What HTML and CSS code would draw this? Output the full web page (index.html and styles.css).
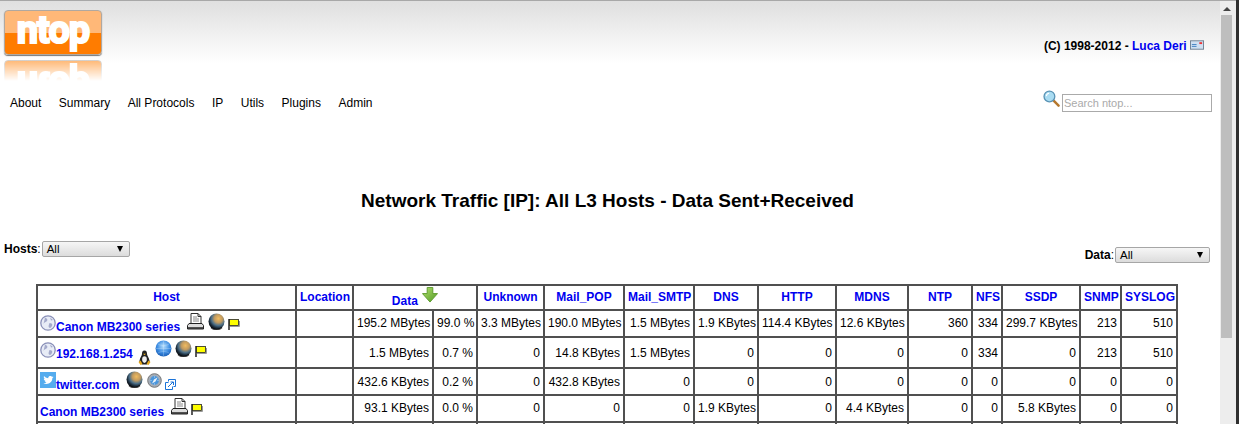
FILE: index.html
```html
<!DOCTYPE html>
<html>
<head>
<meta charset="utf-8">
<title>ntop</title>
<link rel="stylesheet" href="styles.css">
</head>
<body>
<div class="window">
<main class="page">
  <header class="masthead">
    <div class="logo-block">
      <div class="logo"><span class="logo-text">ntop</span></div>
      <div class="logo-mirror" aria-hidden="true"><div class="logo flipped"><span class="logo-text">ntop</span></div></div>
    </div>
    <p class="credit">(C) 1998-2012 - <a href="#">Luca Deri</a>
      <svg class="mail" width="14" height="10" viewBox="0 0 15 10"><rect x=".5" y=".5" width="14" height="9" fill="#cfe0f2" stroke="#6f7f90"/><rect x="10" y="2" width="3" height="2" fill="#e33"/><path d="M2 4.500h5M2 6.500h5" stroke="#3f7fc0"/></svg>
    </p>
  </header>
  <div class="navrow">
    <nav class="menu">
      <a>About</a><a>Summary</a><a>All Protocols</a><a>IP</a><a>Utils</a><a>Plugins</a><a>Admin</a>
    </nav>
    <div class="search">
      <svg class="lens" width="17" height="17" viewBox="0 0 18 18"><path d="M10.500 10.500l6 6" stroke="#b5772c" stroke-width="2.600" stroke-linecap="round"/><circle cx="6.800" cy="6.800" r="5.700" fill="#a9dcf2" stroke="#5a93b5" stroke-width="1.400"/><path d="M3.500 6.500a3.500 3.500 0 0 1 3-3" stroke="#fff" fill="none" stroke-width="1.200"/></svg>
      <input class="search-box" type="text" placeholder="Search ntop...">
    </div>
  </div>
  <h1 class="title">Network Traffic [IP]: All L3 Hosts - Data Sent+Received</h1>
  <div class="filters">
    <div class="filter"><b>Hosts</b>:<span class="picker hosts-picker">All<i class="caret"></i></span></div>
    <div class="filter data-filter"><b>Data</b>:<span class="picker data-picker">All<i class="caret"></i></span></div>
  </div>
  <table class="traffic">
    <colgroup>
      <col class="c1"><col class="c2"><col class="c3"><col class="c4"><col class="c5"><col class="c6"><col class="c7"><col class="c8"><col class="c9"><col class="c10"><col class="c11"><col class="c12"><col class="c13"><col class="c14"><col class="c15">
    </colgroup>
    <tr class="head">
      <th><a>Host</a></th><th><a>Location</a></th>
      <th colspan="2" class="data-head"><a>Data</a> <svg class="down" width="16" height="16" viewBox="0 0 17 17"><defs><linearGradient id="arrowfill" x1="0" y1="0" x2="1" y2="1"><stop offset="0" stop-color="#b4e070"/><stop offset="1" stop-color="#4f9a22"/></linearGradient></defs><path d="M5.500 .5h6v6.500h5L8.500 16 .5 7h5z" fill="url(#arrowfill)" stroke="#5c9a2c"/></svg></th>
      <th><a>Unknown</a></th><th><a>Mail_POP</a></th><th><a>Mail_SMTP</a></th><th><a>DNS</a></th><th><a>HTTP</a></th><th><a>MDNS</a></th><th><a>NTP</a></th><th><a>NFS</a></th><th><a>SSDP</a></th><th><a>SNMP</a></th><th><a>SYSLOG</a></th>
    </tr>
    <tr class="r1">
      <td class="host"><svg class="ic globe-grey" width="16" height="16" viewBox="0 0 16 16"><use href="#g-grey"/></svg><a>Canon MB2300 series</a><svg class="ic after-name" width="17" height="17" viewBox="0 0 17 17"><use href="#g-printer"/></svg><svg class="ic gap4" width="17" height="17" viewBox="0 0 17 17"><use href="#g-earth"/></svg><svg class="ic flag" width="12" height="13" viewBox="0 0 12 13"><use href="#g-flag"/></svg></td>
      <td></td><td>195.2 MBytes</td><td>99.0 %</td><td>3.3 MBytes</td><td>190.0 MBytes</td><td>1.5 MBytes</td><td>1.9 KBytes</td><td>114.4 KBytes</td><td>12.6 KBytes</td><td>360</td><td>334</td><td>299.7 KBytes</td><td>213</td><td>510</td>
    </tr>
    <tr class="r2">
      <td class="host"><svg class="ic globe-grey" width="16" height="16" viewBox="0 0 16 16"><use href="#g-grey"/></svg><a>192.168.1.254</a><svg class="ic tux" width="13" height="15" viewBox="0 0 13 15"><use href="#g-tux"/></svg><svg class="ic gap4" width="17" height="17" viewBox="0 0 17 17"><use href="#g-blue"/></svg><svg class="ic gap3" width="17" height="17" viewBox="0 0 17 17"><use href="#g-earth"/></svg><svg class="ic flag" width="12" height="13" viewBox="0 0 12 13"><use href="#g-flag"/></svg></td>
      <td></td><td>1.5 MBytes</td><td>0.7 %</td><td>0</td><td>14.8 KBytes</td><td>1.5 MBytes</td><td>0</td><td>0</td><td>0</td><td>0</td><td>334</td><td>0</td><td>213</td><td>510</td>
    </tr>
    <tr class="r3">
      <td class="host"><svg class="ic bird" width="16" height="16" viewBox="0 0 16 16"><rect width="16" height="16" fill="#55acee"/><path d="M13 4.800c-.4.200-.8.300-1.200.3.400-.3.700-.6.900-1.100-.4.200-.8.400-1.300.5-.9-1-2.900-.4-3.100 1-.1.300 0 .6 0 .8-1.700-.1-3.200-.9-4.200-2.200-.6 1-.3 2.100.6 2.800-.3 0-.6-.1-.9-.2 0 1 .7 1.900 1.700 2.100-.3.100-.6.100-.9 0 .3.800 1 1.400 1.900 1.400-.9.700-2 1-3.100.9 3.800 2.300 9-.1 9-5 .4-.3.800-.7 1.100-1.100z" fill="#fff"/></svg><a>twitter.com</a><svg class="ic after-name" width="17" height="17" viewBox="0 0 17 17"><use href="#g-earth"/></svg><svg class="ic compass gap4" width="15" height="15" viewBox="0 0 15 15"><circle cx="7.500" cy="7.500" r="6.800" fill="#a4adb8" stroke="#777"/><circle cx="7.500" cy="7.500" r="4.400" fill="#4a96dc"/><path d="M10.500 4.500l-2 4-3.500 2 2-4z" fill="#eef3f8"/><path d="M7.500 3.500v1M7.500 10.500v1M3.500 7.500h1M10.500 7.500h1" stroke="#fff" stroke-width=".6"/></svg><svg class="ic ext gap3" width="11" height="11" viewBox="0 0 11 11"><path d="M.5 3.500h3M.5 3.500v7h7v-3" fill="none" stroke="#1a73d8"/><path d="M3.500 .5h7v7h-2M3.500 .5v2" fill="none" stroke="#1a73d8"/><path d="M3 8l5-5M5.500 3h3v3" fill="none" stroke="#1a73d8"/></svg></td>
      <td></td><td>432.6 KBytes</td><td>0.2 %</td><td>0</td><td>432.8 KBytes</td><td>0</td><td>0</td><td>0</td><td>0</td><td>0</td><td>0</td><td>0</td><td>0</td><td>0</td>
    </tr>
    <tr class="r4">
      <td class="host"><a>Canon MB2300 series</a><svg class="ic after-name" width="17" height="17" viewBox="0 0 17 17"><use href="#g-printer"/></svg><svg class="ic flag" width="12" height="13" viewBox="0 0 12 13"><use href="#g-flag"/></svg></td>
      <td></td><td>93.1 KBytes</td><td>0.0 %</td><td>0</td><td>0</td><td>0</td><td>1.9 KBytes</td><td>0</td><td>4.4 KBytes</td><td>0</td><td>0</td><td>5.8 KBytes</td><td>0</td><td>0</td>
    </tr>
    <tr class="r5"><td></td><td></td><td></td><td></td><td></td><td></td><td></td><td></td><td></td><td></td><td></td><td></td><td></td><td></td><td></td></tr>
  </table>
</main>
<aside class="scrollbar"><span class="arrow"></span><span class="thumb"></span></aside>
<div class="edge"></div>
</div>
<svg class="defs" width="0" height="0">
  <defs>
    <radialGradient id="earth" cx=".62" cy=".32" r=".72"><stop offset="0" stop-color="#f0bc60"/><stop offset=".35" stop-color="#c09a60"/><stop offset=".6" stop-color="#4d7088"/><stop offset=".82" stop-color="#1a2a38"/><stop offset="1" stop-color="#08090c"/></radialGradient>
    <radialGradient id="bluegl" cx=".5" cy=".35" r=".7"><stop offset="0" stop-color="#b8e0fc"/><stop offset=".55" stop-color="#3f8fe4"/><stop offset="1" stop-color="#1458b0"/></radialGradient>
    <symbol id="g-grey" viewBox="0 0 16 16"><circle cx="8" cy="8" r="7.200" fill="#e8ecf6" stroke="#8a90b8" stroke-width="1.300"/><path d="M5 2.500c2 1 3 2 2 3.500s-3 1-3.500 3M9.500 8c2 0 3.500 1 2.500 3s-2 2.500-3 1.500 0-3 .5-4.500zM10 2.500l3 2.500-2 .5z" fill="#a4aacb"/></symbol>
    <symbol id="g-earth" viewBox="0 0 17 17"><circle cx="8.500" cy="8.500" r="8" fill="url(#earth)"/><path d="M3 14.500a8 8 0 0 0 11 0" fill="none" stroke="#000" stroke-opacity=".7" stroke-width="1.400"/></symbol>
    <symbol id="g-blue" viewBox="0 0 17 17"><circle cx="8.500" cy="8.500" r="8" fill="url(#bluegl)"/><path d="M8.500 1v15M1 8.500h15M3 4c3 2 8 2 11 0M3 13c3-2 8-2 11 0" fill="none" stroke="#dff0ff" stroke-opacity=".45" stroke-width=".6"/></symbol>
    <symbol id="g-printer" viewBox="0 0 17 17"><path d="M4 .5h7l3 3v8H4z" fill="#fff" stroke="#333"/><path d="M11 .5v3h3" fill="none" stroke="#333"/><path d="M6 4h4M6 6h6M6 8h6" stroke="#888"/><path d="M.5 12.500l1.500-2h13l1.500 2v3.500h-16z" fill="#ddd" stroke="#222"/><path d="M1 15h15" stroke="#222" stroke-width="1.500"/></symbol>
    <symbol id="g-flag" viewBox="0 0 12 13"><path d="M1 1v11" stroke="#000" stroke-width="1.300"/><rect x="1.500" y="1.500" width="9" height="6" fill="#ff0" stroke="#222" stroke-width=".8"/><path d="M2 8.500h9.500V3" fill="none" stroke="#999"/></symbol>
    <symbol id="g-tux" viewBox="0 0 13 15"><path d="M6.500 .5c-2 0-2.600 1.700-2.500 3.500 0 1.500-2 3.500-2.300 6L1 12.500 4 14.500h5l3-2-.7-2.500C11 7.500 9 5.500 9 4 9.100 2.200 8.500.5 6.500.5z" fill="#222"/><path d="M4.700 7c-1 2-.8 5 1.800 6 2.600-1 2.800-4 1.800-6-1-1-2.600-1-3.600 0z" fill="#eee"/><path d="M5 3.800h3L6.500 5.200z" fill="#e8b020"/><path d="M.5 12l2-1.500L4.500 14l-2 1zM12.500 12l-2-1.500-2 3.500 2 1z" fill="#e8a818"/></symbol>
  </defs>
</svg>
</body>
</html>
```

FILE: styles.css
```css
* { box-sizing: border-box; }
html, body { margin: 0; padding: 0; height: 424px; overflow: hidden; background: #fff; }
body { font-family: "Liberation Sans", Arial, sans-serif; font-size: 12px; color: #000; }
a { color: inherit; text-decoration: none; }
.defs { position: absolute; }
.window { display: flex; width: 1239px; height: 424px; overflow: hidden; }
.page { width: 1220px; flex: none; height: 424px; overflow: hidden; background: linear-gradient(#e0e0e0 1px, #e4e4e4 10px, #fff 62px, #fff); border-top: 1px solid #a8a8a8; }

.masthead { display: flex; justify-content: space-between; height: 80px; padding: 9px 16px 0 4px; }
.logo-block { width: 98px; }
.logo { width: 98px; height: 45px; border-radius: 4px; border: 1px solid #b0a8a0; background: linear-gradient(#ffb878 0, #ffb878 22px, #ff7c00 22px, #ff7c00 100%); box-shadow: 0 1px 1px #777; display: flex; justify-content: center; }
.logo-text { font-family: Roboto, sans-serif; font-weight: 700; font-size: 38px; line-height: 39px; height: 39px; letter-spacing: -1px; color: #fff; -webkit-text-stroke: 2px #fff; }
.logo-mirror { height: 21px; margin-top: 5px; overflow: hidden; -webkit-mask-image: linear-gradient(rgba(0,0,0,.55), rgba(0,0,0,0)); mask-image: linear-gradient(rgba(0,0,0,.55), rgba(0,0,0,0)); }
.flipped { transform: scaleY(-1); box-shadow: none; }
.credit { margin: 29px 0 0; font-weight: 700; font-size: 12px; line-height: 14px; height: 14px; }
.credit a, .traffic a { color: #0000f0; }
.mail { vertical-align: 0; }

.navrow { display: flex; justify-content: space-between; height: 30px; padding: 0 8px 0 10px; }
.menu { display: flex; gap: 17.500px; line-height: 14px; padding-top: 15px; }
.search { display: flex; align-items: flex-start; padding-top: 9px; }
.lens { margin-right: 2px; }
.search-box { width: 150px; height: 18px; margin-top: 4px; padding: 0 1px; border: 1px solid #aaa; font: 11px "Liberation Sans", sans-serif; background: #fff; border-radius: 0; outline: none; }
.search-box::placeholder { color: #aaa; opacity: 1; }

.title { margin: 79px 0 0; padding-right: 5px; text-align: center; font-size: 19px; line-height: 22px; font-weight: 700; }

.filters { display: flex; justify-content: space-between; align-items: flex-start; padding: 0 10px 0 4px; margin-top: 29px; height: 43px; }
.filter { display: flex; align-items: center; height: 16px; font-size: 12px; }
.filter b { font-weight: 700; }
.data-filter { margin-top: 6px; }
.picker { display: flex; align-items: center; justify-content: space-between; height: 16px; margin-left: 1px; padding: 0 6px 0 4px; border: 1px solid #a6a6a6; border-radius: 2px; background: linear-gradient(#f6f6f6, #dcdcdc); font-size: 11.500px; }
.hosts-picker { width: 88px; }
.data-picker { width: 95px; }
.caret { width: 0; height: 0; border-left: 3px solid transparent; border-right: 3px solid transparent; border-top: 6px solid #000; }

.traffic { width: 1140px; margin-left: 36px; border-collapse: collapse; table-layout: fixed; font-size: 12px; background: #fff; }
.traffic td, .traffic th { border: 2px solid #505050; padding: 0 3px; white-space: nowrap; }
.traffic td { text-align: right; color: #000; }
.traffic th { text-align: center; font-size: 12px; font-weight: 700; padding-bottom: 2px; }
.traffic td.host { text-align: left; padding: 0 0 0 2px; font-weight: 700; font-size: 12px; }
.r1 td:not(.host), .r4 td:not(.host) { padding-bottom: 2px; }
.head { height: 25px; }
.r1 { height: 27px; }
.r2 { height: 31px; }
.r3 { height: 27px; }
.r4 { height: 27px; }
.r5 { height: 27px; }
.data-head a { position: relative; top: 2px; }
.down { vertical-align: 0; margin-left: 1px; }
.ic { vertical-align: 1px; }
.globe-grey { vertical-align: 0; }
.bird { vertical-align: 1px; }
.after-name { margin-left: 7px; }
.gap4 { margin-left: 4px; }
.gap3 { margin-left: 3px; }
.flag { vertical-align: 0; margin-left: 3px; }
.tux { vertical-align: -7px; margin-left: 5px; }
.compass { vertical-align: 1px; }
.ext { vertical-align: -1px; }

.c1 { width: 259px; } .c2 { width: 57px; } .c3 { width: 80px; } .c4 { width: 44px; } .c5 { width: 67px; }
.c6 { width: 80px; } .c7 { width: 70px; } .c8 { width: 64px; } .c9 { width: 78px; } .c10 { width: 72px; }
.c11 { width: 64px; } .c12 { width: 30px; } .c13 { width: 78px; } .c14 { width: 41px; } .c15 { width: 56px; }

.scrollbar { width: 16px; flex: none; height: 424px; background: #ededed; border-top: 1px solid #a8a8a8; display: flex; flex-direction: column; align-items: center; }
.arrow { margin-top: 6px; margin-right: 3px; width: 0; height: 0; border-left: 4px solid transparent; border-right: 4px solid transparent; border-bottom: 4px solid #444; }
.thumb { margin-top: 4px; margin-right: 3px; width: 11px; height: 323px; background: #bebebe; }
.edge { width: 3px; flex: none; background: #2f2f2f; }
```
